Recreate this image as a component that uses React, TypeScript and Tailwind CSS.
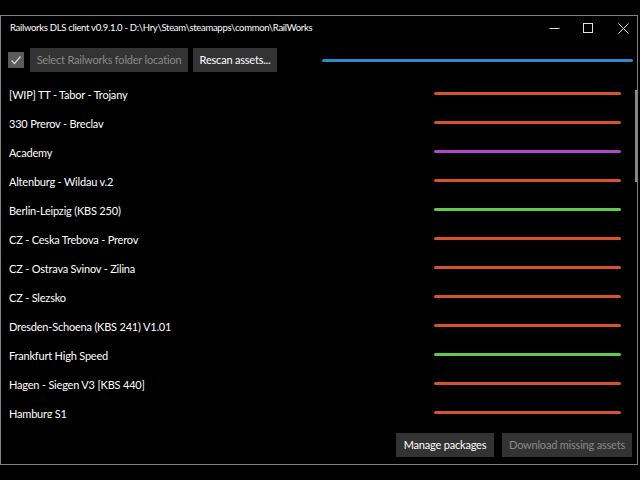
import React from "react";

const RED = "#d8522e";
const PURPLE = "#b247cb";
const GREEN = "#5fcb4a";

const items: [string, string][] = [
  ["[WIP] TT - Tabor - Trojany", RED],
  ["330 Prerov - Breclav", RED],
  ["Academy", PURPLE],
  ["Altenburg - Wildau v.2", RED],
  ["Berlin-Leipzig (KBS 250)", GREEN],
  ["CZ - Ceska Trebova - Prerov", RED],
  ["CZ - Ostrava Svinov - Zilina", RED],
  ["CZ - Slezsko", RED],
  ["Dresden-Schoena (KBS 241) V1.01", RED],
  ["Frankfurt High Speed", GREEN],
  ["Hagen - Siegen V3 [KBS 440]", RED],
  ["Hamburg S1", RED],
];

export default function App() {
  return (
    <div
      className="w-[640px] h-[480px] bg-black overflow-hidden text-white"
      style={{ fontFamily: 'Lato, "Noto Sans", sans-serif' }}
    >
      <div className="mt-[15px] w-[638px] h-[450px] border border-[#808080] flex flex-col relative">
        {/* title bar */}
        <div className="h-[30px] pb-[6px] flex items-center pl-[9px]">
          <span className="text-[9.5px] tracking-[-0.3px] text-white whitespace-nowrap">
            Railworks DLS client v0.9.1.0 - D:\Hry\Steam\steamapps\common\RailWorks
          </span>
          <div className="ml-auto flex items-center h-full">
            <div className="w-[34px] h-full flex items-center justify-center">
              <svg width="11" height="11" viewBox="0 0 11 11">
                <line x1="0.5" y1="5.5" x2="10.5" y2="5.5" stroke="#e0e0e0" strokeWidth="1" />
              </svg>
            </div>
            <div className="w-[34px] h-full flex items-center justify-center">
              <svg width="11" height="11" viewBox="0 0 11 11">
                <rect x="0.5" y="0.5" width="9" height="9" fill="none" stroke="#e0e0e0" strokeWidth="1" />
              </svg>
            </div>
            <div className="ml-[4px] w-[28px] h-full flex items-center justify-center">
              <svg width="11" height="11" viewBox="0 0 11 11">
                <path d="M0.5 0.5 L10.5 10.5 M10.5 0.5 L0.5 10.5" stroke="#e0e0e0" strokeWidth="1" />
              </svg>
            </div>
          </div>
        </div>
        {/* toolbar */}
        <div className="h-[24px] mt-[2px] flex items-center pl-[7px]">
          <div className="w-[16px] h-[16px] bg-[#5a5a5a] flex items-center justify-center">
            <svg width="12" height="12" viewBox="0 0 12 12">
              <path d="M1.5 6.5 L4.5 9.5 L10.5 2.5" fill="none" stroke="#d8d8d8" strokeWidth="1.2" />
            </svg>
          </div>
          <div className="ml-[6px] h-[24px] w-[158px] bg-[#333333] flex items-center justify-center text-[11px] tracking-[-0.2px] text-[#8a8a8a] whitespace-nowrap">
            Select Railworks folder location
          </div>
          <div className="ml-[5px] h-[24px] w-[84px] bg-[#333333] flex items-center justify-center text-[11px] tracking-[-0.2px] text-white whitespace-nowrap">
            Rescan assets...
          </div>
          <div className="ml-[45px] w-[311px] h-[3px] bg-[#2a8ad4] rounded-full" />
        </div>
        {/* list */}
        <div className="mt-[8px] h-[338px] overflow-hidden relative">
          {items.map(([name, color]) => (
            <div key={name} className="h-[29px] flex items-center pl-[8px] pr-[16px]">
              <span className="text-[11px] tracking-[-0.2px] text-white whitespace-nowrap mt-[1px]">{name}</span>
              <div className="ml-auto w-[187px] h-[3px] rounded-full mt-[-2px]" style={{ backgroundColor: color }} />
            </div>
          ))}
          <div className="absolute right-0 top-[10px] w-[2px] h-[92px] bg-[#8a8a8a]" />
        </div>
        {/* bottom */}
        <div className="mt-auto mb-[7px] flex justify-end gap-[8px] pr-[5px]">
          <div className="h-[24px] w-[98px] bg-[#333333] flex items-center justify-center text-[11px] tracking-[-0.2px] text-white whitespace-nowrap">
            Manage packages
          </div>
          <div className="h-[24px] w-[130px] bg-[#333333] flex items-center justify-center text-[11px] tracking-[-0.2px] text-[#8a8a8a] whitespace-nowrap">
            Download missing assets
          </div>
        </div>
      </div>
    </div>
  );
}
